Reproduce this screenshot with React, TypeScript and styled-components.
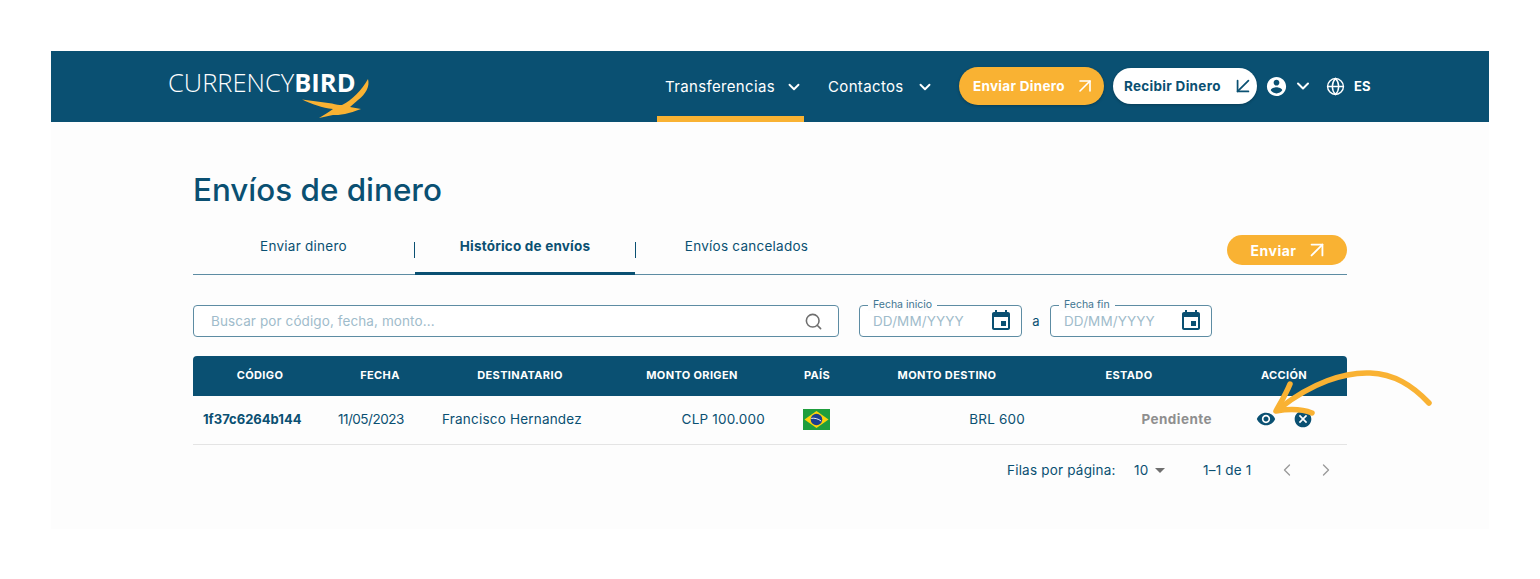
import React from "react";
import styled, { createGlobalStyle } from "styled-components";
import {
  ArrowDownLeft,
  ArrowUpRight,
  ChevronDown,
  ChevronLeft,
  ChevronRight,
  Globe,
  Search,
} from "lucide-react";

const NAVY = "#0a5072";
const ORANGE = "#f9b233";
const COLUMNS = "134px 106px 174px 170px 80px 180px 184px 126px";

const GlobalStyle = createGlobalStyle`
  html, body {
    margin: 0;
    background: #fff;
    font-family: Inter, "Open Sans", "Liberation Sans", sans-serif;
    color: ${NAVY};
  }
  * { box-sizing: border-box; }
`;

const Page = styled.div`
  padding: 51px 51px 50px;
  width: 1540px;
  height: 579px;
  overflow: hidden;
`;

const Frame = styled.div`
  position: relative;
  height: 478px;
  background: #fdfdfd;
`;

const Header = styled.header`
  height: 71px;
  background: ${NAVY};
  display: flex;
  align-items: stretch;
  padding-left: 117px;
`;

const Logo = styled.div`
  position: relative;
  width: 489px;
  padding-top: 16px;
  font-family: "Open Sans", sans-serif;
  font-size: 25.5px;
  line-height: 30px;
  font-weight: 300;
  color: #fff;
  white-space: nowrap;
  b { font-weight: 700; }
`;

const Bird = styled.svg`
  position: absolute;
  left: 132px;
  top: 25px;
`;

const NavItem = styled.div<{ $active?: boolean; $width: number; $gap: number }>`
  width: ${(p) => p.$width}px;
  display: flex;
  align-items: center;
  padding-left: 8px;
  gap: ${(p) => p.$gap}px;
  color: #fff;
  font-size: 15px;
  letter-spacing: 0.35px;
  border-bottom: 6px solid ${(p) => (p.$active ? ORANGE : "transparent")};
  padding-top: 6px;
`;

const NavSpacer = styled.div`
  width: 16px;
`;

const Actions = styled.div`
  display: flex;
  align-items: center;
  height: 71px;
  padding-bottom: 1px;
`;

const PillButton = styled.button<{ $light?: boolean }>`
  display: flex;
  align-items: center;
  justify-content: space-between;
  height: ${(p) => (p.$light ? 36 : 38)}px;
  border: 0;
  border-radius: 19px;
  font-family: inherit;
  font-size: 13.5px;
  font-weight: 700;
  letter-spacing: 0.3px;
  white-space: nowrap;
  padding: 0 ${(p) => (p.$light ? 1 : 7)}px 0 ${(p) => (p.$light ? 11 : 14)}px;
  background: ${(p) => (p.$light ? "#fff" : ORANGE)};
  color: ${(p) => (p.$light ? NAVY : "#fff")};
  width: ${(p) => (p.$light ? 144 : 145)}px;
  margin-right: ${(p) => (p.$light ? 8 : 9)}px;
  box-shadow: 0 1px 3px rgba(0, 0, 0, 0.25);
`;

const Lang = styled.span`
  color: #fff;
  font-size: 13px;
  font-weight: 700;
  margin-left: 9px;
`;

const IconSlot = styled.span<{ $left?: number; $right?: number }>`
  display: flex;
  color: #fff;
  margin-left: ${(p) => p.$left ?? 0}px;
  margin-right: ${(p) => p.$right ?? 0}px;
`;

const Content = styled.main`
  padding: 50px 142px 0;
`;

const Title = styled.h1`
  margin: 0 0 19px;
  font-size: 31.4px;
  line-height: 36px;
  font-weight: 500;
  color: ${NAVY};
`;

const TabBar = styled.div`
  display: flex;
  align-items: flex-start;
  height: 48px;
  border-bottom: 1px solid #5d8ca3;
`;

const Tab = styled.div<{ $active?: boolean }>`
  position: relative;
  width: ${(p) => (p.$active ? 220 : 221)}px;
  height: 48px;
  padding-top: 10px;
  text-align: center;
  font-size: 13.5px;
  line-height: 18px;
  font-weight: ${(p) => (p.$active ? 700 : 400)};
  letter-spacing: ${(p) => (p.$active ? 0.2 : 0.25)}px;
  border-bottom: 3px solid ${(p) => (p.$active ? NAVY : "transparent")};
`;

const TabDivider = styled.span`
  width: 1px;
  height: 16px;
  margin-top: 15px;
  background: ${NAVY};
`;

const SendButton = styled.button`
  margin-left: auto;
  margin-top: 8px;
  width: 120px;
  height: 30px;
  border: 0;
  border-radius: 15px;
  background: ${ORANGE};
  color: #fff;
  font-family: inherit;
  font-size: 14px;
  font-weight: 700;
  letter-spacing: 0.5px;
  display: flex;
  align-items: center;
  justify-content: center;
  gap: 7px;
  padding: 0 0 0 6px;
`;

const Filters = styled.div`
  display: flex;
  align-items: center;
  margin-top: 30px;
  height: 32px;
`;

const InputBox = styled.div<{ $width: number }>`
  position: relative;
  width: ${(p) => p.$width}px;
  height: 32px;
  border: 1px solid #5d8ca3;
  border-radius: 4px;
  background: #fff;
  display: flex;
  align-items: center;
  justify-content: space-between;
`;

const SearchBox = styled(InputBox)`
  padding: 0 15px 0 17px;
  margin-right: 20px;
`;

const DateBox = styled(InputBox)`
  padding: 0 8px 0 13px;
`;

const Placeholder = styled.span`
  color: #9fbccb;
  font-size: 13.5px;
  letter-spacing: 0.1px;
`;

const FloatLabel = styled.label`
  position: absolute;
  left: 8px;
  top: -7px;
  padding: 0 5px;
  background: #fdfdfd;
  font-size: 10.5px;
  line-height: 12px;
  color: #3f7591;
`;

const RangeSep = styled.span`
  width: 28px;
  text-align: center;
  font-size: 13px;
`;

const Table = styled.div`
  margin-top: 19px;
`;

const HeadRow = styled.div`
  display: grid;
  grid-template-columns: ${COLUMNS};
  height: 40px;
  padding-bottom: 2px;
  align-items: center;
  background: ${NAVY};
  border-radius: 4px 4px 0 0;
`;

const HeadCell = styled.div`
  text-align: center;
  color: #fff;
  font-size: 11px;
  font-weight: 700;
  letter-spacing: 0.35px;
`;

const BodyRow = styled.div`
  display: grid;
  grid-template-columns: ${COLUMNS};
  height: 49px;
  padding-bottom: 2px;
  align-items: center;
  border-bottom: 1px solid #e4e4e4;
  font-size: 13.5px;
  letter-spacing: 0.2px;
`;

const Cell = styled.div<{ $align?: string; $pad?: number }>`
  text-align: ${(p) => p.$align ?? "left"};
  padding: ${(p) =>
    p.$align === "right" ? `0 ${p.$pad ?? 0}px 0 0` : `0 0 0 ${p.$pad ?? 0}px`};
  white-space: nowrap;
`;

const CodeCell = styled(Cell)`
  font-size: 13px;
  font-weight: 700;
  letter-spacing: 0;
`;

const DateCell = styled(Cell)`
  letter-spacing: -0.5px;
`;

const StatusCell = styled(Cell)`
  color: #8f8f8f;
  font-weight: 700;
  letter-spacing: 0.45px;
`;

const FlagCell = styled.div`
  display: flex;
  justify-content: center;
  padding-right: 1px;
`;

const ActionCell = styled.div`
  display: flex;
  align-items: center;
  gap: 17px;
  padding-left: 35px;
`;

const Pagination = styled.div`
  display: flex;
  align-items: center;
  height: 50px;
  font-size: 13.5px;
  letter-spacing: 0.2px;
  padding-left: 814px;
  white-space: nowrap;
  > * { flex-shrink: 0; }
`;

const RowsLabel = styled.span`
  width: 108px;
`;

const PageSize = styled.span`
  display: flex;
  align-items: center;
  margin-left: 19px;
  width: 69px;
`;

const PageCount = styled.span`
  width: 74px;
`;

const PagerIcon = styled.span`
  display: flex;
  color: #9a9a9a;
  margin-right: 19px;
`;

const Caret = styled.span`
  width: 0;
  height: 0;
  margin-left: 7px;
  border-left: 5px solid transparent;
  border-right: 5px solid transparent;
  border-top: 5px solid #6f6f6f;
`;

const ArrowOverlay = styled.svg`
  position: absolute;
  left: 1215px;
  top: 315px;
  pointer-events: none;
`;

const UserIcon = () => (
  <svg width="23" height="23" viewBox="0 0 24 24" fill="#fff">
    <path d="M12 2C6.48 2 2 6.48 2 12s4.48 10 10 10 10-4.48 10-10S17.52 2 12 2zm0 3c1.66 0 3 1.34 3 3s-1.34 3-3 3-3-1.34-3-3 1.34-3 3-3zm0 14.2c-2.5 0-4.71-1.28-6-3.22.03-1.99 4-3.08 6-3.08 1.99 0 5.97 1.09 6 3.08-1.29 1.94-3.5 3.22-6 3.22z" />
  </svg>
);

const CalendarIcon = () => (
  <svg width="24" height="24" viewBox="0 0 24 24" fill={NAVY}>
    <path d="M17 12h-5v5h5v-5zM16 1v2H8V1H6v2H5c-1.11 0-1.99.9-1.99 2L3 19c0 1.1.89 2 2 2h14c1.1 0 2-.9 2-2V5c0-1.1-.9-2-2-2h-1V1h-2zm3 18H5V8h14v11z" />
  </svg>
);

const EyeIcon = () => (
  <svg width="20" height="20" viewBox="0 0 24 24" fill={NAVY}>
    <path d="M12 4.5C7 4.5 2.73 7.61 1 12c1.73 4.39 6 7.5 11 7.5s9.27-3.11 11-7.5c-1.73-4.39-6-7.5-11-7.5zM12 17c-2.76 0-5-2.24-5-5s2.24-5 5-5 5 2.24 5 5-2.24 5-5 5zm0-8c-1.66 0-3 1.34-3 3s1.34 3 3 3 3-1.34 3-3-1.34-3-3-3z" />
  </svg>
);

const CancelIcon = () => (
  <svg width="20" height="20" viewBox="0 0 24 24" fill={NAVY}>
    <path d="M12 2C6.47 2 2 6.47 2 12s4.47 10 10 10 10-4.47 10-10S17.53 2 12 2zm5 13.59L15.59 17 12 13.41 8.41 17 7 15.59 10.59 12 7 8.41 8.41 7 12 10.59 15.59 7 17 8.41 13.41 12 17 15.59z" />
  </svg>
);

const BrazilFlag = () => (
  <svg width="27" height="21" viewBox="0 0 27 21">
    <rect width="27" height="21" fill="#1f9e3d" />
    <path d="M13.5 2L25.5 10.5 13.5 19 1.5 10.5z" fill="#fbd20b" />
    <circle cx="13.5" cy="10.5" r="5.8" fill="#1b3f8f" />
    <path d="M8.2 9.4c3.4-.6 7 .3 10 2.7" stroke="#fff" strokeWidth="0.9" fill="none" />
  </svg>
);

const columns = [
  "CÓDIGO",
  "FECHA",
  "DESTINATARIO",
  "MONTO ORIGEN",
  "PAÍS",
  "MONTO DESTINO",
  "ESTADO",
  "ACCIÓN",
];

export default function App() {
  return (
    <Page>
      <GlobalStyle />
      <Frame>
        <Header>
          <Logo>
            CURRENCY<b>BIRD</b>
            <Bird width="72" height="44" viewBox="0 0 72 44">
              <path
                d="M2 23.5C12 24.5 22 26.5 32 27.5 36 28.5 39 29 42 29 52 24 62 14 68 3 70 10 66 18 58 24L50 31 61 33C55 35 50 37 45 38 40 39 36 39 33 39 28 40 24 41 19 42 24 39 29 36 33 33 22 32 12 28 2 23.5z"
                fill={ORANGE}
              />
            </Bird>
          </Logo>
          <NavItem $active $width={147} $gap={10}>
            Transferencias
            <ChevronDown size={18} strokeWidth={2.5} />
          </NavItem>
          <NavSpacer />
          <NavItem $width={139} $gap={12}>
            Contactos
            <ChevronDown size={18} strokeWidth={2.5} />
          </NavItem>
          <Actions>
            <PillButton>
              Enviar Dinero
              <ArrowUpRight size={24} strokeWidth={1.6} />
            </PillButton>
            <PillButton $light>
              Recibir Dinero
              <ArrowDownLeft size={26} strokeWidth={1.6} />
            </PillButton>
            <UserIcon />
            <IconSlot $left={5} $right={13}>
              <ChevronDown size={20} strokeWidth={2.4} />
            </IconSlot>
            <IconSlot>
              <Globe size={19} strokeWidth={1.8} />
            </IconSlot>
            <Lang>ES</Lang>
          </Actions>
        </Header>
        <Content>
          <Title>Envíos de dinero</Title>
          <TabBar>
            <Tab>Enviar dinero</Tab>
            <TabDivider />
            <Tab $active>Histórico de envíos</Tab>
            <TabDivider />
            <Tab>Envíos cancelados</Tab>
            <SendButton>
              Enviar
              <ArrowUpRight size={26} strokeWidth={1.7} />
            </SendButton>
          </TabBar>
          <Filters>
            <SearchBox $width={646}>
              <Placeholder>Buscar por código, fecha, monto...</Placeholder>
              <Search size={19} strokeWidth={2} color="#6f6f6f" />
            </SearchBox>
            <DateBox $width={163}>
              <FloatLabel>Fecha inicio</FloatLabel>
              <Placeholder>DD/MM/YYYY</Placeholder>
              <CalendarIcon />
            </DateBox>
            <RangeSep>a</RangeSep>
            <DateBox $width={162}>
              <FloatLabel>Fecha fin</FloatLabel>
              <Placeholder>DD/MM/YYYY</Placeholder>
              <CalendarIcon />
            </DateBox>
          </Filters>
          <Table>
            <HeadRow>
              {columns.map((name) => (
                <HeadCell key={name}>{name}</HeadCell>
              ))}
            </HeadRow>
            <BodyRow>
              <CodeCell $pad={10}>1f37c6264b144</CodeCell>
              <DateCell $pad={11}>11/05/2023</DateCell>
              <Cell $pad={9}>Francisco Hernandez</Cell>
              <Cell $align="right" $pad={12}>
                CLP 100.000
              </Cell>
              <FlagCell>
                <BrazilFlag />
              </FlagCell>
              <Cell $align="right" $pad={12}>
                BRL 600
              </Cell>
              <StatusCell $align="right" $pad={9}>
                Pendiente
              </StatusCell>
              <ActionCell>
                <EyeIcon />
                <CancelIcon />
              </ActionCell>
            </BodyRow>
            <Pagination>
              <RowsLabel>Filas por página:</RowsLabel>
              <PageSize>
                10
                <Caret />
              </PageSize>
              <PageCount>1–1 de 1</PageCount>
              <PagerIcon>
                <ChevronLeft size={20} strokeWidth={1.6} />
              </PagerIcon>
              <PagerIcon>
                <ChevronRight size={20} strokeWidth={1.6} />
              </PagerIcon>
            </Pagination>
          </Table>
        </Content>
        <ArrowOverlay width="175" height="60" viewBox="0 0 175 60">
          <path
            d="M163 37C146 19 128 8 104 7 78 6 46 17 14 42"
            fill="none"
            stroke={ORANGE}
            strokeWidth="5.5"
            strokeLinecap="round"
          />
          <path
            d="M24 18C20 28 15 36 10 45 22 43 36 43 46 47"
            fill="none"
            stroke={ORANGE}
            strokeWidth="5.5"
            strokeLinecap="round"
            strokeLinejoin="round"
          />
        </ArrowOverlay>
      </Frame>
    </Page>
  );
}
